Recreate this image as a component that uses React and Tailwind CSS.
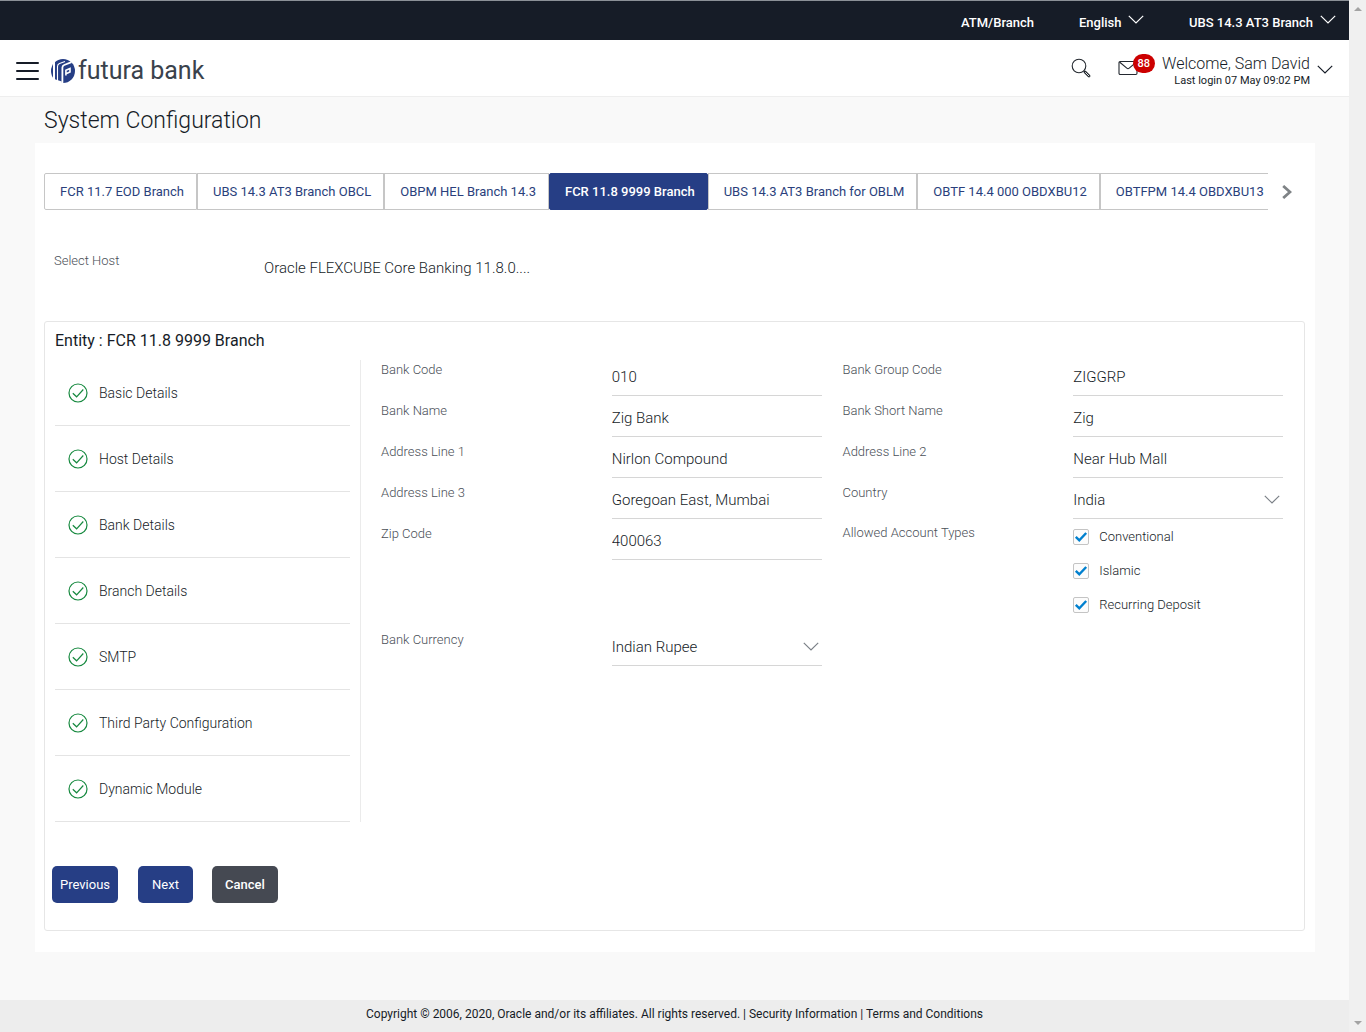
import React, { useState } from 'react';

const TABS = [
    'FCR 11.7 EOD Branch',
    'UBS 14.3 AT3 Branch OBCL',
    'OBPM HEL Branch 14.3',
    'FCR 11.8 9999 Branch',
    'UBS 14.3 AT3 Branch for OBLM',
    'OBTF 14.4 000 OBDXBU12',
    'OBTFPM 14.4 OBDXBU13',
];

const STEPS = [
    'Basic Details',
    'Host Details',
    'Bank Details',
    'Branch Details',
    'SMTP',
    'Third Party Configuration',
    'Dynamic Module',
];

const FIELDS = [
    { id: 'bankCode', label: 'Bank Code', value: '010' },
    { id: 'bankGroupCode', label: 'Bank Group Code', value: 'ZIGGRP' },
    { id: 'bankName', label: 'Bank Name', value: 'Zig Bank' },
    { id: 'bankShortName', label: 'Bank Short Name', value: 'Zig' },
    { id: 'address1', label: 'Address Line 1', value: 'Nirlon Compound' },
    { id: 'address2', label: 'Address Line 2', value: 'Near Hub Mall' },
    { id: 'address3', label: 'Address Line 3', value: 'Goregoan East, Mumbai' },
    { id: 'country', label: 'Country', value: 'India', type: 'select' },
    { id: 'zipCode', label: 'Zip Code', value: '400063' },
    { id: 'accountTypes', label: 'Allowed Account Types', value: ['Conventional', 'Islamic', 'Recurring Deposit'], type: 'checks' },
    { id: 'currency', label: 'Bank Currency', value: 'Indian Rupee', type: 'select' },
];

const Chevron = ({ className }) => (
    <svg viewBox="0 0 16 9" className={className} fill="none" stroke="currentColor" strokeWidth="1.2" aria-hidden="true">
        <path d="M.8.8 8 8 15.2.8" />
    </svg>
);

const Logo = () => (
    <a href="#" className="flex items-center gap-[3px] text-[#3a424c]">
        <svg viewBox="0 0 24 24" className="w-6 h-6" aria-hidden="true">
            <circle cx="12" cy="12" r="12" fill="#263e85" />
            <g fill="none" stroke="#fff">
                <path d="M3 3v20" strokeWidth="2" />
                <path d="M6.500 24V7.500Q6.500 5.200 8.500 4.500L14 2.600" strokeWidth="1.100" />
                <path d="M11.400 24V8.500Q11.400 6.700 13.200 6L20.500 3.200" strokeWidth="1.800" />
                <path d="M14.900 16.500V11.200L19 9.500V13L15 14.700" strokeWidth="1.600" />
            </g>
            <path d="M0 19 10.800 22.500V24H0z" fill="#fff" />
        </svg>
        <span className="text-[25px] leading-8">futura bank</span>
    </a>
);

const TopSelect = ({ label, value }) => (
    <div className="relative">
        <select aria-label={label} defaultValue={value} className="appearance-none bg-transparent pr-[22px] font-medium outline-none">
            <option>{value}</option>
        </select>
        <Chevron className="absolute right-0 top-0.5 w-4 h-[9px] pointer-events-none" />
    </div>
);

const CheckOption = ({ name, label }) => (
    <label className="flex items-center h-[34px] gap-[10px] text-[13px]">
        <span className="relative w-4 h-4">
            <input
                type="checkbox"
                name={name}
                defaultChecked
                className="peer block appearance-none w-4 h-4 border border-[#c4c4c4] rounded-xs bg-[#fcfcfc]"
            />
            <svg viewBox="0 0 16 16" className="absolute inset-0 hidden peer-checked:block pointer-events-none" fill="none" stroke="#0080cf" strokeWidth="2.4" aria-hidden="true">
                <path d="M2.8 7.8 6.3 11.3 13.2 4" />
            </svg>
        </span>
        {label}
    </label>
);

const control = 'w-full h-[41px] pt-1 border-b border-[#d6d6d6] bg-transparent text-[15px] font-light text-[#161c27] outline-none';

const Field = ({ field }) => {
    if (field.type === 'checks') {
        return (
            <fieldset className="flex pt-px pb-[3px]" aria-labelledby={field.id}>
                <span id={field.id} className="w-1/2 pt-[5px] text-[13px] leading-4 text-[#4a4f57]">{field.label}</span>
                <div className="w-1/2">
                    {field.value.map((item) => <CheckOption key={item} name={field.id} label={item} />)}
                </div>
            </fieldset>
        );
    }

    return (
        <div className="flex items-start">
            <label htmlFor={field.id} className="w-1/2 pt-[7px] text-[13px] leading-4 text-[#4a4f57]">{field.label}</label>
            <div className="relative w-1/2 pr-[21px]">
                {field.type === 'select' ? (
                    <>
                        <select id={field.id} defaultValue={field.value} className={`${control} appearance-none`}>
                            <option>{field.value}</option>
                        </select>
                        <Chevron className="absolute right-6 top-[17px] w-4 h-[9px] text-[#7b8087] pointer-events-none" />
                    </>
                ) : (
                    <input id={field.id} type="text" defaultValue={field.value} className={control} />
                )}
            </div>
        </div>
    );
};

const Header = () => (
    <header>
        <div className="flex items-center justify-end gap-[45px] h-10 pt-1 pr-[13px] border-t border-[#8b9097] bg-[#161c27] text-white text-[13px] font-medium">
            <a href="#">ATM/Branch</a>
            <TopSelect label="Language" value="English" />
            <TopSelect label="Entity" value="UBS 14.3 AT3 Branch" />
        </div>
        <div className="flex items-center justify-between h-[57px] px-4 border-b border-[#eeeeee] bg-white">
            <div className="flex items-center pt-1.5">
                <button aria-label="Menu" className="flex flex-col gap-[6px] w-[23px] mr-3">
                    <span className="w-full h-0.5 rounded-full bg-[#161c27]"></span>
                    <span className="w-full h-0.5 rounded-full bg-[#161c27]"></span>
                    <span className="w-full h-0.5 rounded-full bg-[#161c27]"></span>
                </button>
                <Logo />
            </div>
            <div className="flex items-center">
                <button aria-label="Search" className="mr-[27px]">
                    <svg viewBox="0 0 20 20" className="w-5 h-5" fill="none" stroke="#23282f" aria-hidden="true">
                        <circle cx="8" cy="8" r="6.8" strokeWidth="1.1" />
                        <path d="M12.8 13l1.5 1.3" strokeWidth="1" />
                        <path d="M14 14l4 4" strokeWidth="2.8" strokeLinecap="round" />
                        <path d="M14.5 14.5l3.4 3.4" stroke="#fff" strokeWidth=".9" strokeLinecap="round" />
                    </svg>
                </button>
                <button aria-label="Messages" className="relative w-[37px] h-5 mr-[7px]">
                    <svg viewBox="0 0 20 16" className="w-5 h-4" fill="none" stroke="#23282f" strokeWidth="1.1" aria-hidden="true">
                        <rect x="1" y="1.5" width="18" height="13" rx="1.2" />
                        <path d="M1.5 2l7.3 6.2q1.2 1 2.4 0L18.5 2" />
                    </svg>
                    <span className="absolute right-0 -top-1 h-[19px] px-[5px] rounded-full bg-[#cc0000] text-white text-[11px] leading-[19px] font-medium">88</span>
                </button>
                <button className="flex items-center gap-[7px] pt-1.5 text-right">
                    <span>
                        <span className="block text-base leading-5 font-light text-[#161c27]">Welcome, Sam David</span>
                        <span className="block text-[11px] leading-[14px] text-[#161c27]">Last login 07 May 09:02 PM</span>
                    </span>
                    <Chevron className="w-4 h-[9px] mb-1" />
                </button>
            </div>
        </div>
    </header>
);

const Tabs = ({ active, onChange }) => (
    <div className="flex">
        <div role="tablist" className="flex flex-1 min-w-0 overflow-hidden">
            {TABS.map((tab) => (
                <button
                    key={tab}
                    role="tab"
                    aria-selected={tab === active}
                    onClick={() => onChange(tab)}
                    className={`shrink-0 h-[37px] pl-[15px] pr-3 border text-[13px] whitespace-nowrap first:rounded-l-xs ${
                        tab === active
                            ? 'border-[#263e85] bg-[#263e85] text-white font-medium rounded-xs'
                            : 'border-[#c6c6c6] bg-white text-[#2a3f7c]'
                    }`}
                >
                    {tab}
                </button>
            ))}
        </div>
        <button aria-label="Next tabs" className="flex items-center justify-center w-[37px] text-[#7f8386]">
            <svg viewBox="0 0 10 14" className="w-[10px] h-[14px]" fill="none" stroke="currentColor" strokeWidth="2.8" aria-hidden="true">
                <path d="M1.2 1 8 7 1.2 13" />
            </svg>
        </button>
    </div>
);

const Steps = () => (
    <ul className="w-[306px] shrink-0 pr-[10px] border-r border-[#ebebeb]">
        {STEPS.map((step) => (
            <li key={step} className="h-[66px] border-b border-[#e4e4e4]">
                <a href="#" className="flex items-center h-full pl-[13px] gap-[11px] text-sm font-light text-[#161c27]">
                    <svg viewBox="0 0 20 20" className="w-5 h-5" fill="none" stroke="#16893f" strokeWidth="1.2" aria-hidden="true">
                        <circle cx="10" cy="10" r="9" />
                        <path d="M4.8 10.2 8.6 13.8 15.3 6.5" />
                    </svg>
                    {step}
                </a>
            </li>
        ))}
    </ul>
);

const Scrollbar = () => (
    <div className="flex flex-col items-center justify-between w-[17px] py-[7px] bg-[#f0f0f0] text-[#a3a3a3]" aria-hidden="true">
        <svg viewBox="0 0 8 4" className="w-2 h-1" fill="currentColor"><path d="M4 0l4 4H0z" /></svg>
        <svg viewBox="0 0 8 4" className="w-2 h-1" fill="currentColor"><path d="M0 0h8L4 4z" /></svg>
    </div>
);

const App = () => {
    const [active, setActive] = useState('FCR 11.8 9999 Branch');

    return (
        <div className="flex min-h-screen font-['Roboto',sans-serif] text-[#161c27]">
            <div className="flex flex-col flex-1 min-w-0 bg-[#f9f9f9]">
                <Header />

                <main className="flex-1 pl-[35px] pr-[34px] pb-12">
                    <h1 className="pt-0.5 pl-[9px] text-[23px] leading-[44px] font-light">System Configuration</h1>

                    <div className="pt-[30px] pb-[21px] pl-[9px] pr-[10px] bg-white">
                        <Tabs active={active} onChange={setActive} />

                        <div className="flex py-[43px] pl-[10px] font-light">
                            <span className="w-[210px] text-[13px] leading-4 text-[#4a4f57]">Select Host</span>
                            <span className="pt-1.5 text-[15px] leading-[19px]">Oracle FLEXCUBE Core Banking 11.8.0....</span>
                        </div>

                        {/* Entity details */}
                        <section className="border border-[#e6e6e6] rounded-[3px]">
                            <h2 className="pl-[10px] text-base leading-[38px]">Entity : {active}</h2>

                            <div className="flex pl-[10px]">
                                <Steps />
                                <form className="grid grid-cols-2 flex-1 content-start pl-5 -mt-[5px] font-light">
                                    {FIELDS.map((field) => <Field key={field.id} field={field} />)}
                                </form>
                            </div>

                            <div className="flex pt-[44px] pb-[27px] pl-[7px] text-white text-[13px]">
                                <button className="h-[37px] px-2 mr-5 rounded-[5px] bg-[#263e85]">Previous</button>
                                <button className="h-[37px] px-3.5 mr-[19px] rounded-[5px] bg-[#263e85]">Next</button>
                                <button className="h-[37px] px-[13px] rounded-[5px] bg-[#454952] font-medium">Cancel</button>
                            </div>
                        </section>
                    </div>
                </main>

                <footer className="h-8 bg-[#ededed] text-center text-xs leading-7">
                    Copyright © 2006, 2020, Oracle and/or its affiliates. All rights reserved. | <a href="#">Security Information</a> | <a href="#">Terms and Conditions</a>
                </footer>
            </div>
            <Scrollbar />
        </div>
    );
};

export default App;
